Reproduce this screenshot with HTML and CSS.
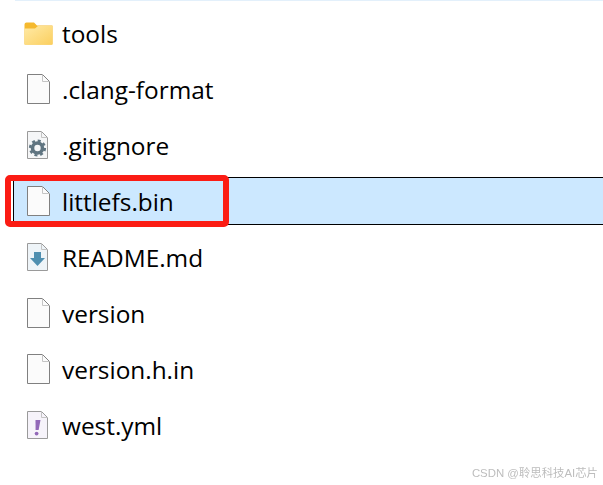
FILE: index.html
```html
<!DOCTYPE html>
<html lang="en">
<head>
  <meta charset="UTF-8">
  <meta name="viewport" content="width=device-width, initial-scale=1.0">
  <title>Files</title>
  <link rel="stylesheet" href="styles.css">
</head>
<body>
  <div class="top-strip"></div>

  <ul class="file-list">
    <li class="file-row">
      <span class="icon-cell">
        <svg class="icon-folder" width="29" height="23" viewBox="0 0 29 23">
          <path d="M0.5 2.5 Q0.5 0.5 2.5 0.5 H10 L13 3.5 H28.5 V22.5 H0.5 Z" fill="#f5b92e"/>
          <path d="M0.5 6.5 H11 L14 4 H28.5 V21.5 Q28.5 22.7 27.3 22.7 H1.7 Q0.5 22.7 0.5 21.5 Z" fill="url(#folderFill)"/>
          <defs>
            <linearGradient id="folderFill" x1="0" y1="0" x2="1" y2="1">
              <stop offset="0" stop-color="#ffeaa6"/>
              <stop offset="1" stop-color="#fbcf5f"/>
            </linearGradient>
          </defs>
        </svg>
      </span>
      <span class="file-name">tools</span>
    </li>

    <li class="file-row">
      <span class="icon-cell">
        <svg width="23" height="30" viewBox="0 0 23 30">
          <path d="M0.5 0.5 H15.5 L22.5 7.5 V29.5 H0.5 Z" fill="#fbfbfb" stroke="#808080"/>
          <path d="M15.5 0.5 V7.5 H22.5" fill="none" stroke="#c4c4c4"/>
        </svg>
      </span>
      <span class="file-name">.clang-format</span>
    </li>

    <li class="file-row">
      <span class="icon-cell">
        <svg width="21" height="28" viewBox="0 0 21 28">
          <path d="M0.5 0.5 H14.5 L20.5 6.5 V27.5 H0.5 Z" fill="#f5f6f7" stroke="#9a9a9a"/>
          <path d="M14.5 0.5 V6.5 H20.5" fill="none" stroke="#c4c4c4"/>
          <circle cx="10.5" cy="17" r="5" fill="none" stroke="#5f7480" stroke-width="3.6"/>
          <circle cx="10.5" cy="17" r="7.4" fill="none" stroke="#5f7480" stroke-width="2.4" stroke-dasharray="3 2.81"/>
        </svg>
      </span>
      <span class="file-name">.gitignore</span>
    </li>

    <li class="file-row selected">
      <span class="icon-cell">
        <svg width="23" height="30" viewBox="0 0 23 30">
          <path d="M0.5 0.5 H15.5 L22.5 7.5 V29.5 H0.5 Z" fill="#fbfbfb" stroke="#808080"/>
          <path d="M15.5 0.5 V7.5 H22.5" fill="none" stroke="#c4c4c4"/>
        </svg>
      </span>
      <span class="file-name">littlefs.bin</span>
      <span class="red-box"></span>
    </li>

    <li class="file-row">
      <span class="icon-cell">
        <svg width="21" height="28" viewBox="0 0 21 28">
          <path d="M0.5 0.5 H14.5 L20.5 6.5 V27.5 H0.5 Z" fill="#eef4f8" stroke="#9a9a9a"/>
          <path d="M14.5 0.5 V6.5 H20.5" fill="none" stroke="#c4c4c4"/>
          <path d="M7 9 H14 V15 H18 L10.5 23 L3 15 H7 Z" fill="#4f8fb0"/>
        </svg>
      </span>
      <span class="file-name">README.md</span>
    </li>

    <li class="file-row">
      <span class="icon-cell">
        <svg width="23" height="30" viewBox="0 0 23 30">
          <path d="M0.5 0.5 H15.5 L22.5 7.5 V29.5 H0.5 Z" fill="#fbfbfb" stroke="#808080"/>
          <path d="M15.5 0.5 V7.5 H22.5" fill="none" stroke="#c4c4c4"/>
        </svg>
      </span>
      <span class="file-name">version</span>
    </li>

    <li class="file-row">
      <span class="icon-cell">
        <svg width="23" height="30" viewBox="0 0 23 30">
          <path d="M0.5 0.5 H15.5 L22.5 7.5 V29.5 H0.5 Z" fill="#fbfbfb" stroke="#808080"/>
          <path d="M15.5 0.5 V7.5 H22.5" fill="none" stroke="#c4c4c4"/>
        </svg>
      </span>
      <span class="file-name">version.h.in</span>
    </li>

    <li class="file-row">
      <span class="icon-cell">
        <svg width="21" height="28" viewBox="0 0 21 28">
          <path d="M0.5 0.5 H14.5 L20.5 6.5 V27.5 H0.5 Z" fill="#f6f3fa" stroke="#9a9a9a"/>
          <path d="M14.5 0.5 V6.5 H20.5" fill="none" stroke="#c4c4c4"/>
          <path d="M8.5 9 H13.5 L11.6 19 H8.6 Z" fill="#9268b8"/>
          <circle cx="9.6" cy="22.6" r="1.9" fill="#9268b8"/>
        </svg>
      </span>
      <span class="file-name">west.yml</span>
    </li>
  </ul>

  <div class="watermark">CSDN @聆思科技AI芯片</div>
</body>
</html>
```

FILE: styles.css
```css
body {
  margin: 0;
  height: 485px;
  overflow: hidden;
  background-color: #fff;
  font-family: "Open Sans", "Noto Sans", sans-serif;
  position: relative;
}

.top-strip {
  height: 1px;
  margin-left: 15px;
  background-color: #e3f0fb;
}

.file-list {
  list-style: none;
  margin: 8px 0 0;
  padding: 0;
  display: flex;
  flex-direction: column;
  gap: 8px;
}

.file-row {
  height: 48px;
  box-sizing: border-box;
  padding-left: 27px;
  display: flex;
  align-items: center;
  position: relative;
}

.icon-cell {
  width: 35px;
  display: flex;
  align-items: center;
}

.icon-folder {
  margin-left: -3px;
}

.file-name {
  font-size: 24.4px;
  color: #000;
  white-space: nowrap;
}

.selected {
  margin-left: 13px;
  padding-left: 13px;
  background-color: #cce8ff;
  border: 1px solid #000;
  border-right: none;
}

.red-box {
  position: absolute;
  left: -9px;
  top: -3px;
  width: 224px;
  height: 52px;
  box-sizing: border-box;
  border: 6px solid #fb1c14;
  border-radius: 5px;
}

.watermark {
  position: absolute;
  right: 5px;
  bottom: 5px;
  font-family: "Liberation Sans", "Noto Sans CJK SC", sans-serif;
  font-size: 11.4px;
  line-height: 14px;
  color: #bdbdbd;
  filter: blur(0.3px);
}
```
